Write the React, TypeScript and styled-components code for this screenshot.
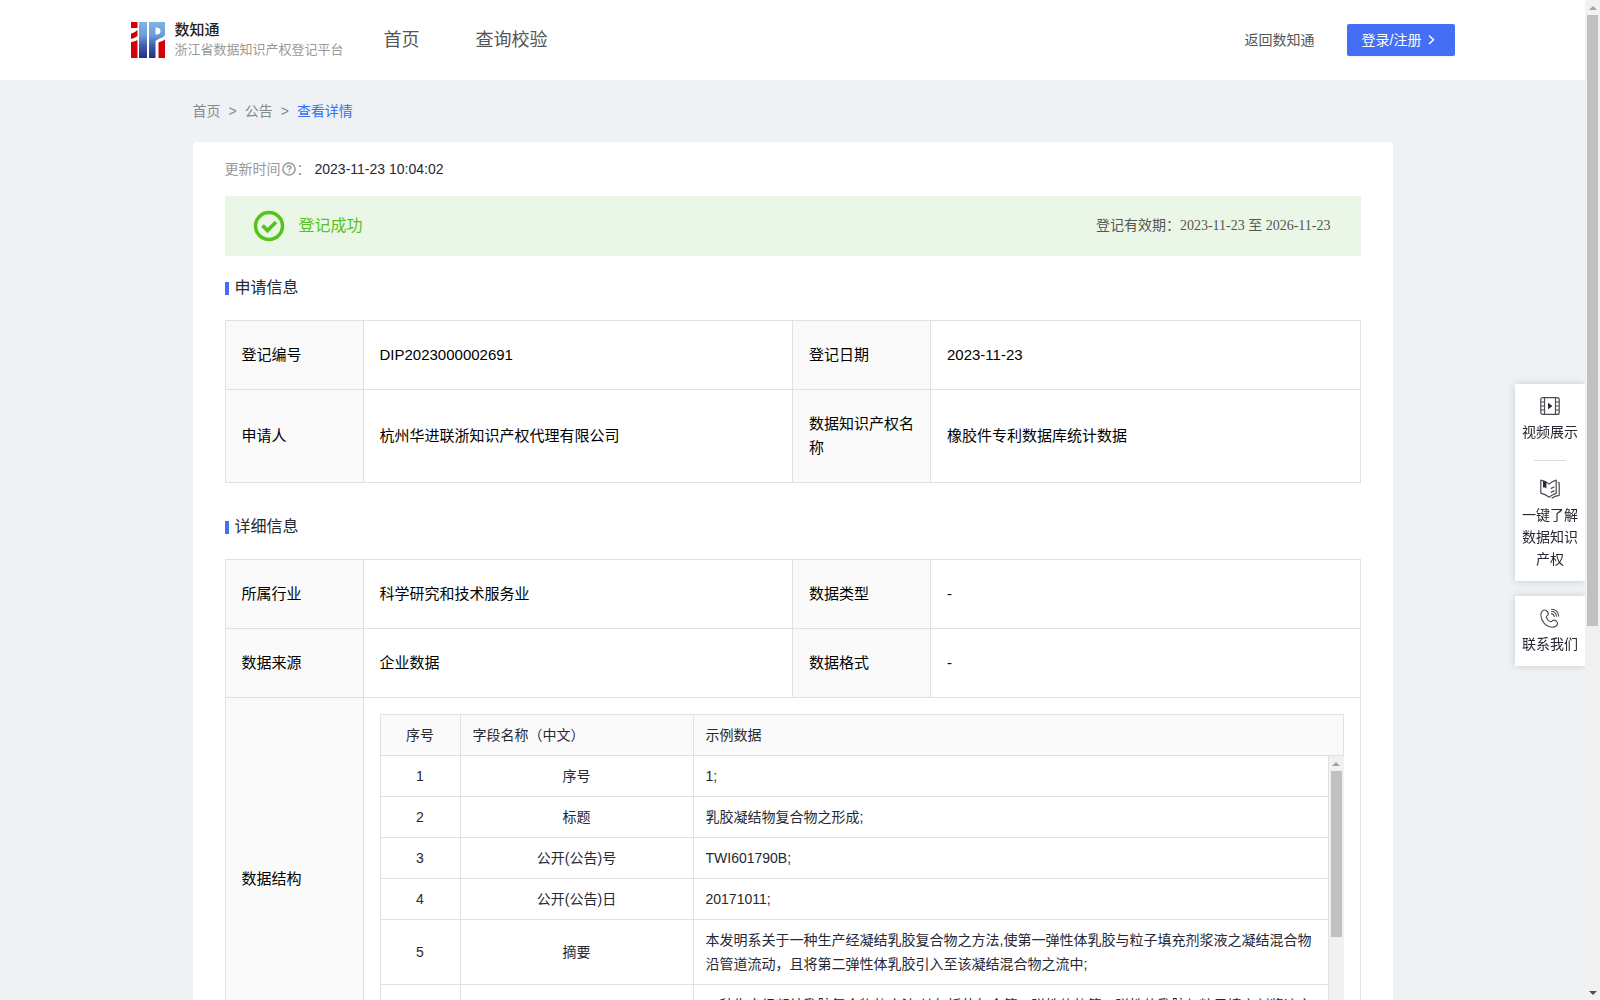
import React from "react";
import styled, { createGlobalStyle } from "styled-components";

const sans = `"Liberation Sans", "Noto Sans CJK SC", sans-serif`;
const serif = `"Liberation Serif", "Noto Sans CJK SC", serif`;
const line = "#e1e1e1";
const blue = "#446ff4";

const GlobalStyle = createGlobalStyle`
  *, *::before, *::after { box-sizing: border-box; }
  body {
    margin: 0;
    background: #eef2f5;
    color: #262833;
    font: 14px/24px ${sans};
  }
  a { color: inherit; text-decoration: none; }
  svg { display: block; flex: none; }
`;

const Shell = styled.div`
  display: flex;
  height: 100vh;
`;

const Pane = styled.div`
  flex: 1;
  min-width: 0;
  overflow-y: auto;
  scrollbar-width: none;
`;

const Bar = styled.div`
  z-index: 2;
  display: flex;
  flex: none;
  flex-direction: column;
  width: 15px;
  background: #f1f1f1;
`;

const Arrow = styled.span<{ $down?: boolean }>`
  display: flex;
  flex: none;
  align-items: center;
  justify-content: center;
  height: 15px;

  &::before {
    border: 4px solid transparent;
    border-top: ${(p) => (p.$down ? "4px solid #505050" : "0")};
    border-bottom: ${(p) => (p.$down ? "0" : "4px solid #a3a3a3")};
    content: "";
  }
`;

const Track = styled.div`
  flex: 1;
  padding: 0 2px;
`;

const Thumb = styled.div<{ $size: number }>`
  height: ${(p) => p.$size}%;
  background: #c1c1c1;
`;

const Header = styled.header`
  height: 80px;
  padding: 0 24px;
  background: #fff;
`;

const HeaderInner = styled.div`
  display: flex;
  align-items: center;
  max-width: 1324px;
  height: 100%;
  margin: 0 auto;
`;

const Brand = styled.a`
  display: flex;
  align-items: center;
  gap: 10px;
`;

const BrandText = styled.span`
  display: flex;
  flex-direction: column;
  line-height: 20px;
`;

const BrandName = styled.span`
  color: #222;
  font-size: 15px;
  font-weight: 500;
`;

const BrandSub = styled.span`
  color: #999;
  font-size: 13px;
`;

const Nav = styled.nav`
  display: flex;
  flex: 1;
  gap: 56px;
  margin-left: 40px;
  color: #555;
  font-size: 18px;
`;

const BackLink = styled.a`
  margin-right: 32px;
  color: #555;
`;

const LoginButton = styled.button`
  display: flex;
  align-items: center;
  gap: 2px;
  height: 32px;
  padding: 0 15px;
  border: 0;
  border-radius: 2px;
  background: ${blue};
  box-shadow: 0 2px 0 rgba(0, 0, 0, 0.04);
  color: #fff;
  font: inherit;
  cursor: pointer;
`;

const Main = styled.main`
  max-width: 1200px;
  margin: 0 auto;
  padding-bottom: 200px;
`;

const Breadcrumb = styled.nav`
  display: flex;
  gap: 8px;
  padding: 19px 0;
  color: #888;
`;

const Current = styled.a`
  color: #3a6df5;
`;

const Card = styled.article`
  min-height: 1248px;
  padding: 0 32px 32px;
  border-radius: 4px;
  background: #fff;
`;

const Updated = styled.div`
  display: flex;
  align-items: center;
  height: 54px;
  color: #999;
`;

const UpdatedTime = styled.time`
  margin-left: 4px;
  color: #262833;
`;

const HelpButton = styled.button`
  padding: 0 1px;
  border: 0;
  background: none;
  color: #999;
  cursor: help;
`;

const Banner = styled.div`
  display: flex;
  align-items: center;
  height: 60px;
  padding: 0 30px 0 28px;
  background: #ebf7e6;
`;

const BannerStatus = styled.strong`
  flex: 1;
  margin-left: 14px;
  color: #52c41a;
  font-size: 16px;
  font-weight: 400;
`;

const Validity = styled.span`
  color: #555;
  font-family: ${serif};
`;

const Section = styled.section`
  margin-bottom: 12px;
`;

const SectionTitle = styled.h2`
  display: flex;
  align-items: center;
  gap: 6px;
  height: 64px;
  margin: 0;
  font-size: 16px;
  font-weight: 400;

  &::before {
    width: 4px;
    height: 13px;
    background: ${blue};
    content: "";
  }
`;

const InfoTable = styled.table`
  width: 100%;
  border-collapse: collapse;
  table-layout: fixed;
  color: #000;
  font-size: 15px;
`;

const LabelCol = styled.col`
  width: 138px;
`;

const Label = styled.th`
  padding: 22px 16px;
  border: 1px solid ${line};
  background: #fafafa;
  font-weight: 400;
  text-align: left;
`;

const Value = styled.td<{ $nested?: boolean }>`
  padding: ${(p) => (p.$nested ? "16px" : "22px 16px")};
  border: 1px solid ${line};
`;

const Fields = styled.div`
  border: 1px solid ${line};
  border-width: 1px 0 1px 1px;
  color: #262833;
  font-size: 14px;
`;

const FieldsHead = styled.div`
  border-right: 1px solid ${line};
  background: #fafafa;
`;

const FieldsBody = styled.div`
  display: flex;
  height: 286px;
`;

const FieldTable = styled.table`
  width: 100%;
  border-collapse: separate;
  border-spacing: 0;
  table-layout: fixed;
`;

const FieldCol = styled.col<{ $width: number }>`
  width: ${(p) => p.$width}px;
`;

const FieldCell = styled.td<{ $center?: boolean }>`
  padding: 8px 12px;
  border-right: 1px solid ${line};
  border-bottom: 1px solid ${line};
  font-weight: 400;
  text-align: ${(p) => (p.$center ? "center" : "left")};

  thead &:last-child {
    border-right: 0;
  }
`;

const Dock = styled.aside`
  position: fixed;
  top: 384px;
  right: 15px;
  display: flex;
  flex-direction: column;
  gap: 15px;
  width: 70px;
`;

const DockBox = styled.div`
  background: #fff;
  box-shadow: 0 0 8px rgba(0, 0, 0, 0.16);
`;

const DockItem = styled.a`
  display: flex;
  flex-direction: column;
  align-items: center;
  gap: 5px;
  padding: 12px 6px 11px;
  line-height: 22px;
  text-align: center;
`;

const DockRule = styled.hr`
  width: 32px;
  height: 1px;
  margin: 6px auto;
  border: 0;
  background: #ddd;
`;

const Logo = () => (
  <svg width="34" height="36" viewBox="0 0 34 36" aria-hidden="true">
    <defs>
      <linearGradient id="sky" x1="0" y1="0" x2="0" y2="1">
        <stop offset="0" stopColor="#7fb2e4" />
        <stop offset="0.35" stopColor="#6f9fda" />
        <stop offset="0.65" stopColor="#3f60ae" />
        <stop offset="1" stopColor="#22307c" />
      </linearGradient>
    </defs>
    <path fill="#d00008" d="M0 0h6.500v6H0zM0 11.500c2.500-.5 4.500-1.500 6.500-3.500v6c-2 1.500-4.500 2.500-6.500 3zM0 20c2.500-.3 4.500-1 6.500-2v18H0z" />
    <path
      fill="url(#sky)"
      d="M8 0h8v36H8zM18 0h16v13c-2 3-6 3-9.500 6V36H18zM24.500 5.500v7c3.500 0 5-1 5-3.500s-1.500-3.500-5-3.500z"
      fillRule="evenodd"
    />
    <path fill="#d00008" d="M27.500 20.500c2-1 4.500-1.500 6.500-3V36h-6.500z" />
  </svg>
);

const Chevron = () => (
  <svg width="16" height="14" viewBox="0 0 16 14" fill="none" stroke="#fff" strokeWidth="1.500" aria-hidden="true">
    <path d="M5 2.500l4.500 4.200L5 11" />
  </svg>
);

const HelpIcon = () => (
  <svg width="14" height="14" viewBox="0 0 14 14" fill="none" stroke="currentColor" strokeWidth="1.500" aria-hidden="true">
    <circle cx="7" cy="7" r="6.100" />
    <path d="M5.200 5.600c0-2.400 3.700-2.400 3.700 0 0 1.300-1.800 1.300-1.800 2.700M7.100 9.300v1.200" />
  </svg>
);

const SuccessIcon = () => (
  <svg width="32" height="32" viewBox="0 0 32 32" fill="none" stroke="#52c41a" aria-hidden="true">
    <circle cx="16" cy="16" r="13.500" strokeWidth="3.500" />
    <path d="M9.500 15.500l5 5 8.500-8.500" strokeWidth="3.800" />
  </svg>
);

const VideoIcon = () => (
  <svg width="20" height="20" viewBox="0 0 20 20" fill="none" stroke="#4a4b54" strokeWidth="1.200" aria-hidden="true">
    <rect x="0.800" y="1.600" width="18.400" height="16.800" rx="2" />
    <path d="M4.500 1.600v16.800M15.500 1.600v16.800M.8 6h3.700M.8 10h3.700M.8 14h3.700M15.500 6h3.700M15.500 10h3.700M15.500 14h3.700" />
    <path d="M8 6.800v6.400l4.500-3.200z" fill="#262833" stroke="none" />
  </svg>
);

const BookIcon = () => (
  <svg width="20" height="20" viewBox="0 0 20 20" fill="none" stroke="#4a4b54" strokeWidth="1.200" strokeLinejoin="round" aria-hidden="true">
    <path d="M.8 1.200c3.500.8 6 2 8.400 3.900 2-2 4.200-3.100 7-3.900v13.200c-2.800.8-5 1.800-7 3.800-2.400-2-4.900-3.100-8.400-4z" />
    <path d="M17.800 3.400l1.400.6v12.300c-3 .4-5.500 1.400-7.600 3" />
    <path d="M10.800 9.600l3.600-1.800M10.800 13.400l3.600-1.800" />
    <path d="M3 1.800l3.400 1.400v6.600L4.700 8.200 3 8.400z" fill="#262833" stroke="none" />
  </svg>
);

const PhoneIcon = () => (
  <svg width="20" height="20" viewBox="0 0 20 20" fill="none" stroke="#4a4b54" strokeWidth="1.100" strokeLinecap="round" aria-hidden="true">
    <path d="M5.600 2.200C3 1.500.8 4 .8 7c.4 6.500 5.200 12 11.200 12.200 3.200 0 6.200-1.700 5.400-4.600-1-1.800-2.700-2.800-4.300-2.400-1 .8-1.300 1.900-2.700 1.500C8.300 12.700 7 11 6.300 9.200c0-1.300 1.700-1.600 2-2.900 0-1.700-1.100-3.400-2.700-4.100z" />
    <path d="M11.500 1.200c4 .2 6.800 3 7.200 7M11.500 3.300c2.800.3 4.700 2.200 5 5M11.500 5.600c1.500.2 2.500 1.200 2.800 2.800" />
  </svg>
);

const fields: [string, string][] = [
  ["序号", "1;"],
  ["标题", "乳胶凝结物复合物之形成;"],
  ["公开(公告)号", "TWI601790B;"],
  ["公开(公告)日", "20171011;"],
  [
    "摘要",
    "本发明系关于一种生产经凝结乳胶复合物之方法,使第一弹性体乳胶与粒子填充剂浆液之凝结混合物沿管道流动，且将第二弹性体乳胶引入至该凝结混合物之流中;",
  ],
  [
    "权利要求",
    "一种生产经凝结乳胶复合物的方法,其包括使包含第一弹性体的第一弹性体乳胶与粒子填充剂浆液之凝结混合物沿管道流动，且将包含第二弹性体的第二弹性体乳胶引入至该凝结混合物之流中;",
  ],
];

const InfoCols = () => (
  <colgroup>
    <LabelCol />
    <col />
    <LabelCol />
    <col />
  </colgroup>
);

const FieldCols = () => (
  <colgroup>
    <FieldCol $width={80} />
    <FieldCol $width={233} />
    <col />
  </colgroup>
);

const InfoRow = ({ cells }: { cells: string[] }) => (
  <tr>
    <Label scope="row">{cells[0]}</Label>
    <Value>{cells[1]}</Value>
    <Label scope="row">{cells[2]}</Label>
    <Value>{cells[3]}</Value>
  </tr>
);

const ScrollBar = ({ size }: { size: number }) => (
  <Bar aria-hidden="true">
    <Arrow />
    <Track>
      <Thumb $size={size} />
    </Track>
    <Arrow $down />
  </Bar>
);

export default function App() {
  return (
    <Shell>
      <GlobalStyle />
      <Pane>
        <Header>
          <HeaderInner>
            <Brand href="#">
              <Logo />
              <BrandText>
                <BrandName>数知通</BrandName>
                <BrandSub>浙江省数据知识产权登记平台</BrandSub>
              </BrandText>
            </Brand>
            <Nav>
              <a href="#">首页</a>
              <a href="#">查询校验</a>
            </Nav>
            <BackLink href="#">返回数知通</BackLink>
            <LoginButton type="button">
              登录/注册
              <Chevron />
            </LoginButton>
          </HeaderInner>
        </Header>

        <Main>
          <Breadcrumb>
            <a href="#">首页</a>
            <span>&gt;</span>
            <a href="#">公告</a>
            <span>&gt;</span>
            <Current href="#">查看详情</Current>
          </Breadcrumb>

          <Card>
            <Updated>
              更新时间
              <HelpButton type="button" aria-label="更新时间说明">
                <HelpIcon />
              </HelpButton>
              ：
              <UpdatedTime>2023-11-23 10:04:02</UpdatedTime>
            </Updated>

            <Banner>
              <SuccessIcon />
              <BannerStatus>登记成功</BannerStatus>
              <Validity>登记有效期：2023-11-23 至 2026-11-23</Validity>
            </Banner>

            <Section>
              <SectionTitle>申请信息</SectionTitle>
              <InfoTable>
                <InfoCols />
                <tbody>
                  <InfoRow cells={["登记编号", "DIP2023000002691", "登记日期", "2023-11-23"]} />
                  <InfoRow
                    cells={["申请人", "杭州华进联浙知识产权代理有限公司", "数据知识产权名称", "橡胶件专利数据库统计数据"]}
                  />
                </tbody>
              </InfoTable>
            </Section>

            <Section>
              <SectionTitle>详细信息</SectionTitle>
              <InfoTable>
                <InfoCols />
                <tbody>
                  <InfoRow cells={["所属行业", "科学研究和技术服务业", "数据类型", "-"]} />
                  <InfoRow cells={["数据来源", "企业数据", "数据格式", "-"]} />
                  <tr>
                    <Label scope="row">数据结构</Label>
                    <Value colSpan={3} $nested>
                      <Fields>
                        <FieldsHead>
                          <FieldTable>
                            <FieldCols />
                            <thead>
                              <tr>
                                <FieldCell as="th" scope="col" $center>
                                  序号
                                </FieldCell>
                                <FieldCell as="th" scope="col">
                                  字段名称（中文）
                                </FieldCell>
                                <FieldCell as="th" scope="col">
                                  示例数据
                                </FieldCell>
                              </tr>
                            </thead>
                          </FieldTable>
                        </FieldsHead>
                        <FieldsBody>
                          <Pane>
                            <FieldTable>
                              <FieldCols />
                              <tbody>
                                {fields.map(([name, sample], i) => (
                                  <tr key={name}>
                                    <FieldCell $center>{i + 1}</FieldCell>
                                    <FieldCell $center>{name}</FieldCell>
                                    <FieldCell>{sample}</FieldCell>
                                  </tr>
                                ))}
                              </tbody>
                            </FieldTable>
                          </Pane>
                          <ScrollBar size={65} />
                        </FieldsBody>
                      </Fields>
                    </Value>
                  </tr>
                </tbody>
              </InfoTable>
            </Section>
          </Card>
        </Main>

        <Dock>
          <DockBox>
            <DockItem href="#">
              <VideoIcon />
              视频展示
            </DockItem>
            <DockRule />
            <DockItem href="#">
              <BookIcon />
              一键了解数据知识产权
            </DockItem>
          </DockBox>
          <DockBox>
            <DockItem href="#">
              <PhoneIcon />
              联系我们
            </DockItem>
          </DockBox>
        </Dock>
      </Pane>
      <ScrollBar size={63} />
    </Shell>
  );
}
